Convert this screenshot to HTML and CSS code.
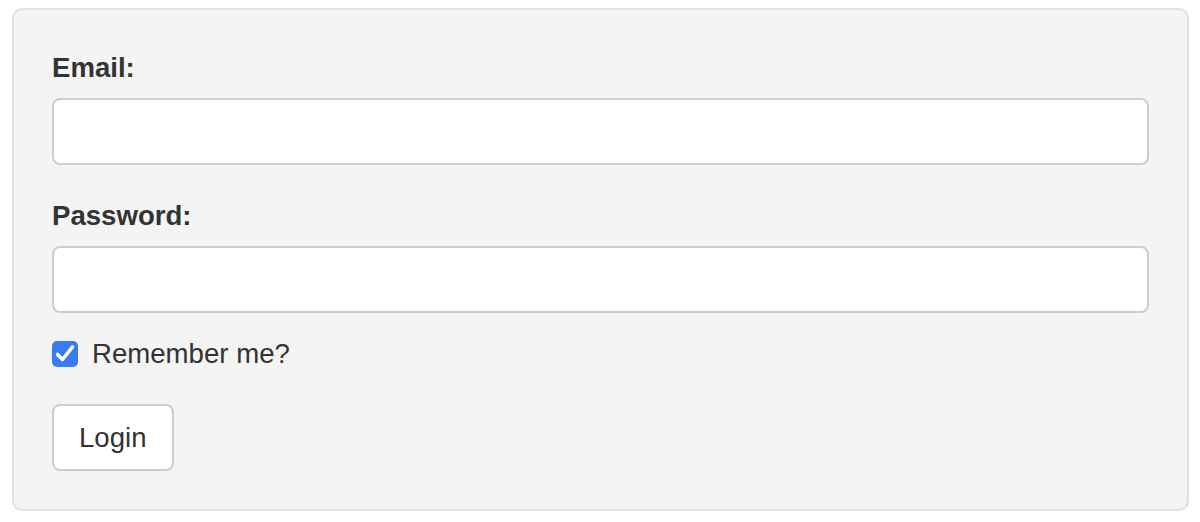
FILE: index.html
```html
<!DOCTYPE html>
<html lang="en">
<head>
    <meta charset="UTF-8">
    <meta name="viewport" content="width=device-width, initial-scale=1.0">
    <title>Login</title>
    <link rel="stylesheet" href="styles.css">
</head>
<body>
    <div class="container">
        <form id="loginForm" onsubmit="return false;">
            <div class="field">
                <label for="email">Email:</label>
                <input type="text" id="email" name="email">
            </div>

            <div class="field">
                <label for="password">Password:</label>
                <input type="password" id="password" name="password">
            </div>

            <label class="remember" for="remember">
                <input type="checkbox" id="remember" name="remember" checked>
                <span class="box">
                    <svg width="26" height="26" viewBox="0 0 26 26">
                        <path d="M5.5 13.5 L10.5 18.5 L20.5 6" fill="none" stroke="#fff" stroke-width="3.6" stroke-linecap="round" stroke-linejoin="round"/>
                    </svg>
                </span>
                <span>Remember me?</span>
            </label>

            <input type="submit" value="Login">
        </form>
    </div>
</body>
</html>
```

FILE: styles.css
```css
body {
    font-family: "Liberation Sans", Arial, sans-serif;
    color: #333;
    margin: 0;
}
.container {
    margin: 8px 11px 0 12px;
    background: #f4f4f4;
    padding: 42px 38px 38px 38px;
    border: 2px solid #e1e1e1;
    border-radius: 10px;
}
.field {
    margin-bottom: 35px;
}
.field:last-of-type {
    margin-bottom: 25px;
}
.field label {
    display: block;
    font-size: 27.6px;
    line-height: 32px;
    font-weight: bold;
    margin-bottom: 14px;
}
input[type="text"], input[type="password"] {
    display: block;
    width: 100%;
    height: 67px;
    padding: 8px 14px;
    border: 2px solid #cdcdcd;
    border-radius: 8px;
    background: #fff;
    font-size: 27px;
    box-sizing: border-box;
    outline: none;
}
.remember {
    display: flex;
    align-items: center;
    gap: 14px;
    font-size: 27.6px;
    line-height: 32px;
    margin-bottom: 34px;
}
.remember input {
    display: none;
}
.remember .box {
    width: 26px;
    height: 26px;
    border-radius: 5px;
    background: #3a7bf3;
    display: flex;
}
input[type="submit"] {
    display: block;
    height: 67px;
    padding: 0 25px;
    background-color: #fff;
    color: #333;
    font-family: inherit;
    font-size: 27.6px;
    border: 2px solid #cdcdcd;
    border-radius: 8px;
    cursor: pointer;
}
```
